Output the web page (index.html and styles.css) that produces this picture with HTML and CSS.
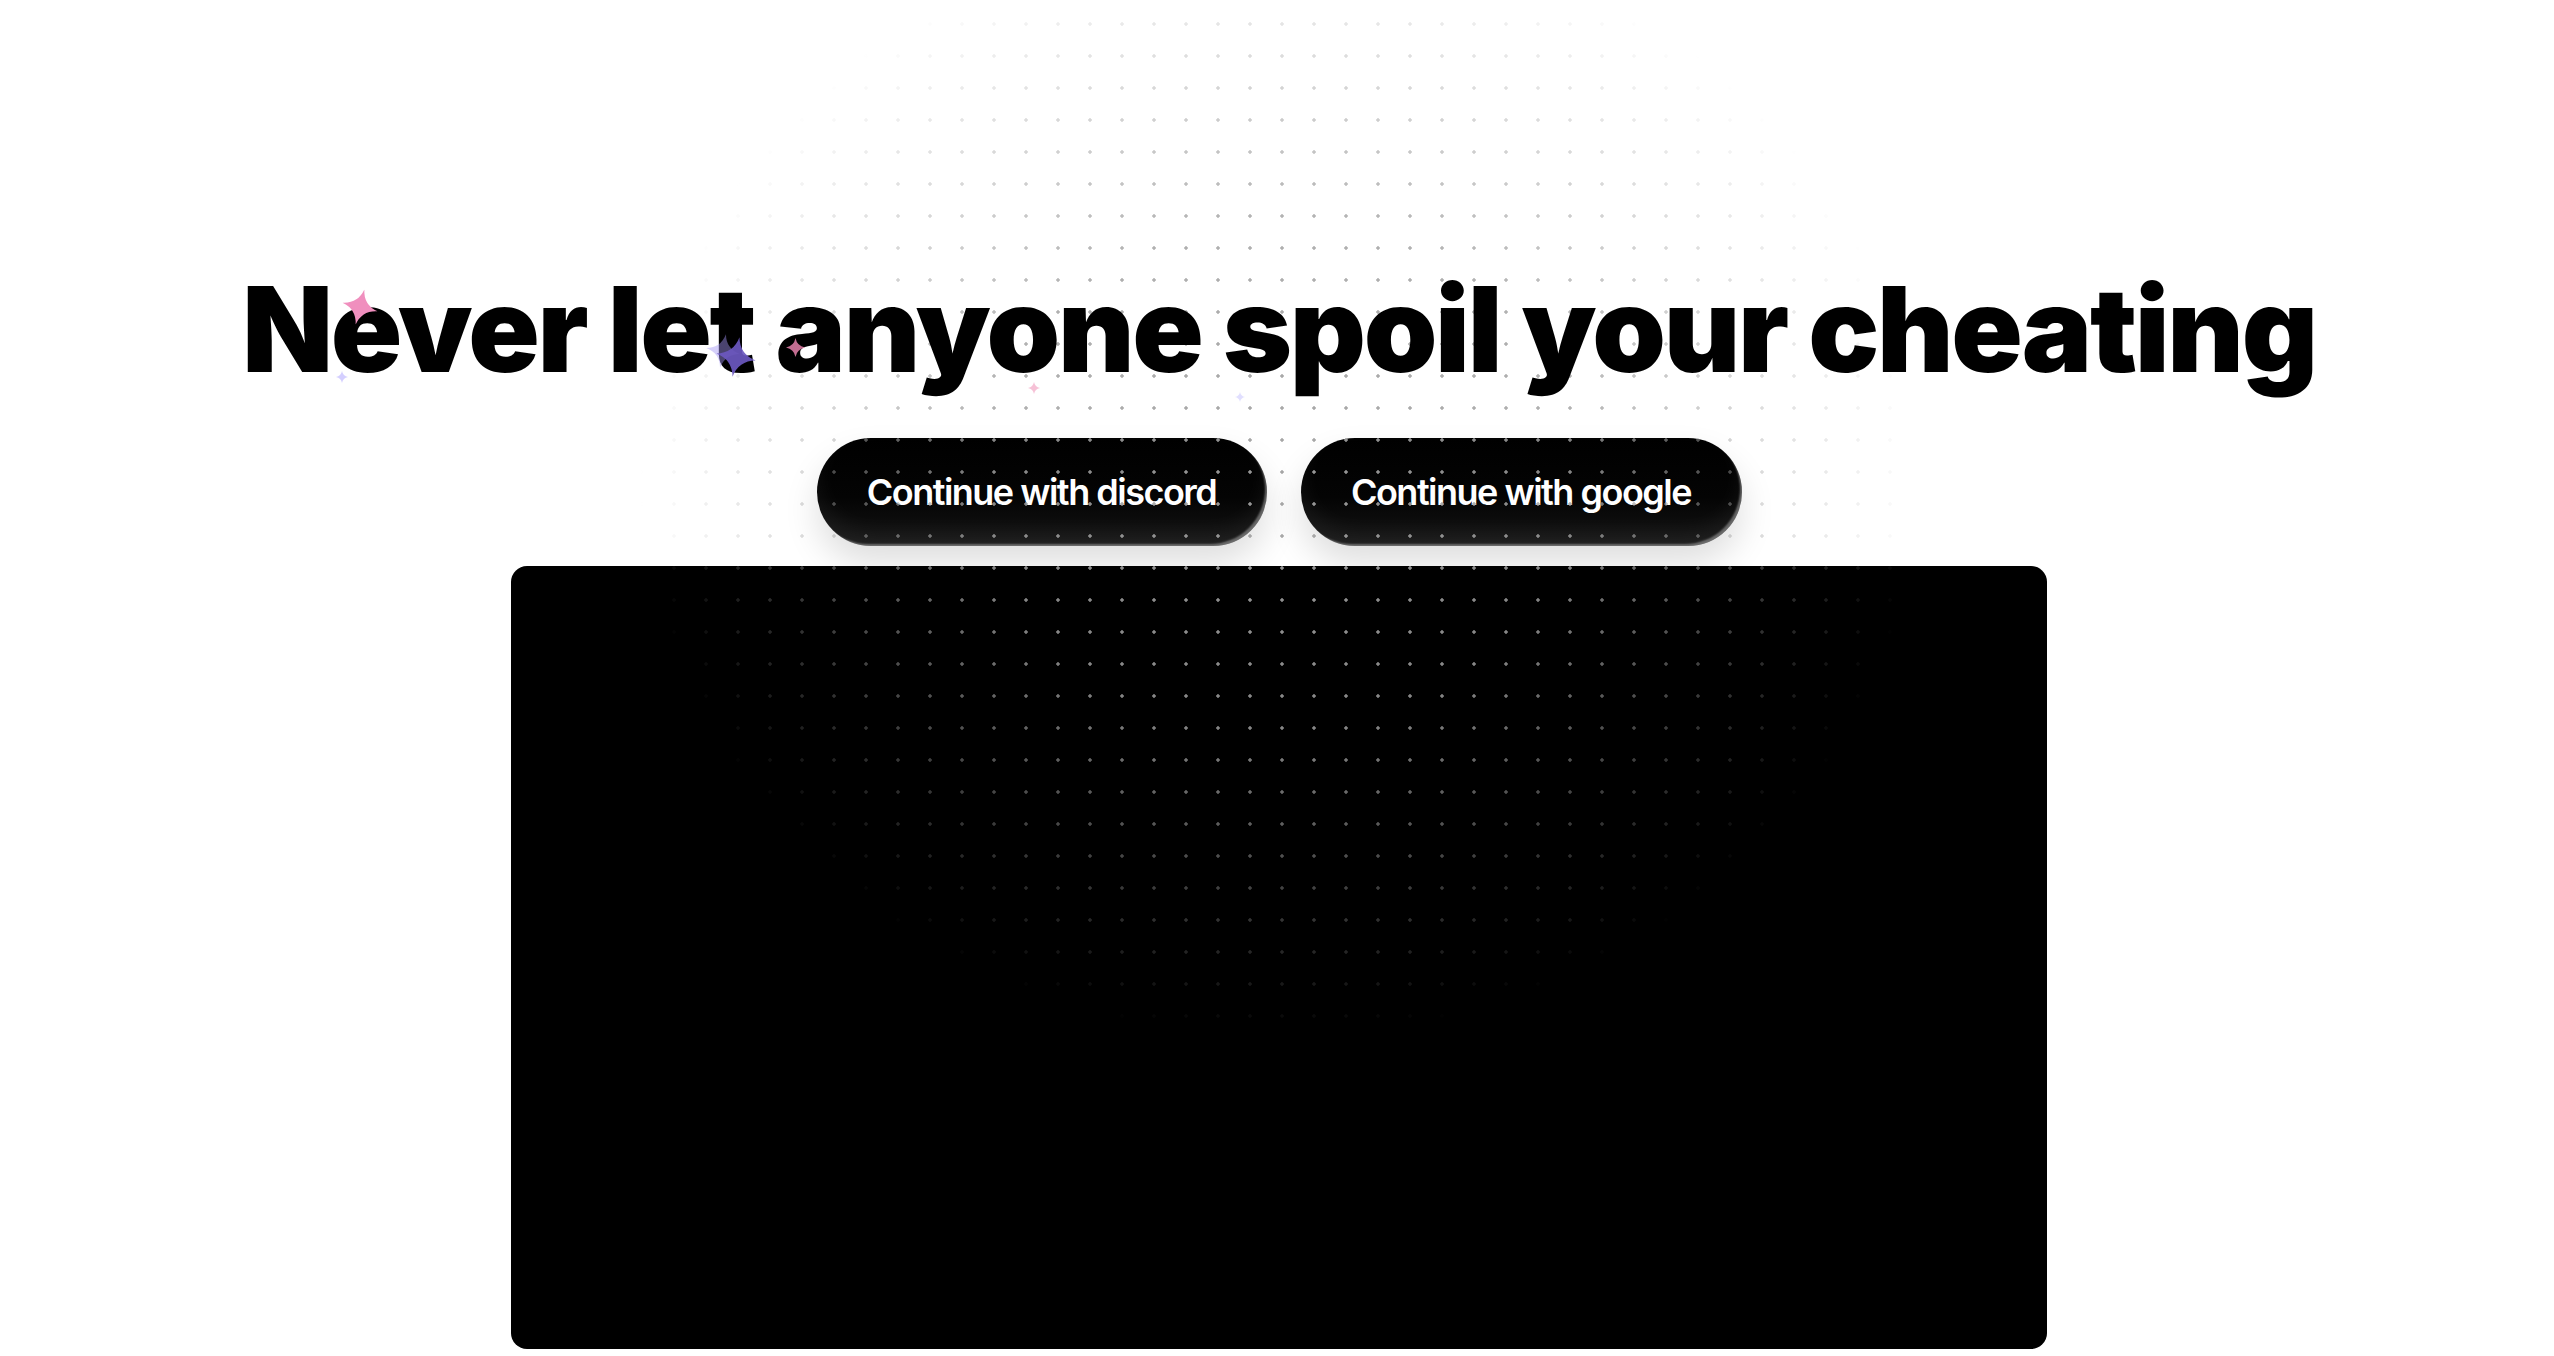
FILE: index.html
```html
<!DOCTYPE html>
<html lang="en">
<head>
<meta charset="utf-8">
<title>Never let anyone spoil your cheating</title>
<link rel="stylesheet" href="styles.css">
</head>
<body>
<div class="page">
  <main class="hero">
    <h1 class="headline">Never let anyone spoil your cheating</h1>
    <div class="actions">
      <button class="pill">Continue with discord</button>
      <button class="pill">Continue with google</button>
    </div>
    <div class="screen"></div>
  </main>
  <div class="dots" aria-hidden="true"></div>
  <div class="sparkles" aria-hidden="true">
    <svg class="spark s1" viewBox="0 0 20 20"><path d="M10 0 Q11.6 8.4 20 10 Q11.6 11.6 10 20 Q8.4 11.6 0 10 Q8.4 8.4 10 0Z"/></svg>
    <svg class="spark s2b" viewBox="0 0 20 20"><path d="M10 0 Q11.6 8.4 20 10 Q11.6 11.6 10 20 Q8.4 11.6 0 10 Q8.4 8.4 10 0Z"/></svg>
    <svg class="spark s2" viewBox="0 0 20 20"><path d="M10 0 Q11.6 8.4 20 10 Q11.6 11.6 10 20 Q8.4 11.6 0 10 Q8.4 8.4 10 0Z"/></svg>
    <svg class="spark s3" viewBox="0 0 20 20"><path d="M10 0 Q11.6 8.4 20 10 Q11.6 11.6 10 20 Q8.4 11.6 0 10 Q8.4 8.4 10 0Z"/></svg>
    <svg class="spark s4" viewBox="0 0 20 20"><path d="M10 0 Q11.6 8.4 20 10 Q11.6 11.6 10 20 Q8.4 11.6 0 10 Q8.4 8.4 10 0Z"/></svg>
    <svg class="spark s5" viewBox="0 0 20 20"><path d="M10 0 Q11.6 8.4 20 10 Q11.6 11.6 10 20 Q8.4 11.6 0 10 Q8.4 8.4 10 0Z"/></svg>
    <svg class="spark s6" viewBox="0 0 20 20"><path d="M10 0 Q11.6 8.4 20 10 Q11.6 11.6 10 20 Q8.4 11.6 0 10 Q8.4 8.4 10 0Z"/></svg>
  </div>
</div>
</body>
</html>
```

FILE: styles.css
```css
* { box-sizing: border-box; }
html, body {
  margin: 0;
  padding: 0;
  background: #ffffff;
}
body {
  font-family: Inter, "Liberation Sans", sans-serif;
  color: #000;
  overflow: hidden;
}
.page {
  position: relative;
  width: 100%;
  height: 1356px;
}
.hero {
  display: flex;
  flex-direction: column;
  align-items: center;
  padding-left: 4px;
}
.headline {
  position: relative;
  z-index: 3;
  margin: 270px 0 0 0;
  font-family: Inter, "Liberation Sans", sans-serif;
  font-weight: 900;
  font-size: 118px;
  line-height: 118px;
  letter-spacing: -2.3px;
  white-space: nowrap;
  color: #000;
}
.actions {
  display: flex;
  gap: 34px;
  margin-top: 50px;
}
.pill {
  height: 108px;
  padding: 0;
  border: none;
  border-radius: 54px;
  background: linear-gradient(180deg, #000 0%, #040404 55%, #151515 100%);
  color: #fff;
  font-family: Inter, "Liberation Sans", sans-serif;
  font-weight: 600;
  font-size: 36px;
  letter-spacing: -1.5px;
  box-shadow:
    inset -3px -3px 2px -1px rgba(255,255,255,0.35),
    inset 0 -14px 22px rgba(255,255,255,0.06),
    0 18px 34px rgba(0,0,0,0.13);
}
.pill:first-child { width: 450px; }
.pill:last-child { width: 441px; }
.screen {
  margin-top: 20px;
  width: 1536px;
  height: 783px;
  background: #000;
  border-radius: 16px;
}
.dots {
  position: absolute;
  inset: 0;
  z-index: 2;
  pointer-events: none;
  background-image: radial-gradient(circle, rgba(160,160,160,0.95) 1.4px, rgba(160,160,160,0) 2.1px);
  background-size: 32px 32px;
  background-position: -14px 8px;
  -webkit-mask-image: radial-gradient(ellipse 640px 560px at 1280px 480px, #000 0%, rgba(0,0,0,0.88) 45%, rgba(0,0,0,0) 100%);
  mask-image: radial-gradient(ellipse 640px 560px at 1280px 480px, #000 0%, rgba(0,0,0,0.88) 45%, rgba(0,0,0,0) 100%);
}
.sparkles {
  position: absolute;
  inset: 0;
  z-index: 4;
  pointer-events: none;
}
.spark {
  position: absolute;
  display: block;
}
.s1 { left: 342px; top: 289px; width: 36px; height: 36px; fill: #f08fbe; transform: rotate(14deg); }
.s2 { left: 716px; top: 336px; width: 40px; height: 42px; fill: #6c58c0; opacity: 0.92; transform: rotate(10deg); }
.s2b { left: 706px; top: 332px; width: 34px; height: 38px; fill: #a496f5; opacity: 0.45; transform: rotate(10deg); }
.s3 { left: 786px; top: 338px; width: 19px; height: 19px; fill: #e680ab; opacity: 0.85; }
.s4 { left: 336px; top: 371px; width: 12px; height: 12px; fill: #b8b0ff; opacity: 0.6; }
.s5 { left: 1028px; top: 382px; width: 12px; height: 12px; fill: #f3a7c6; opacity: 0.7; }
.s6 { left: 1235px; top: 392px; width: 10px; height: 10px; fill: #c4c0ff; opacity: 0.5; }
```
